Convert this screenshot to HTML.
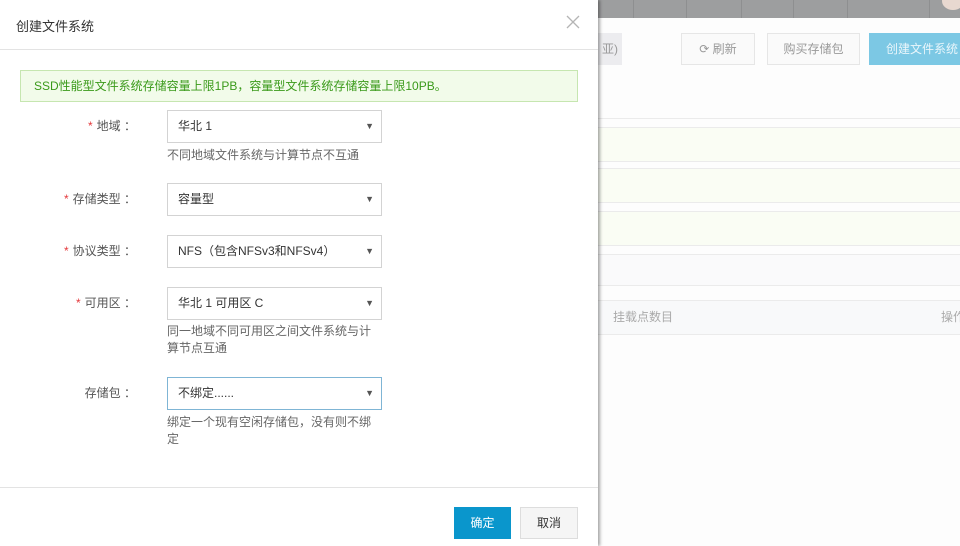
<!DOCTYPE html>
<html><head><meta charset="utf-8"><style>
*{box-sizing:border-box;margin:0;padding:0}
body{width:960px;height:546px;overflow:hidden;position:relative;background:#fdfdfd;font-family:"Liberation Sans","Noto Sans CJK SC",sans-serif;font-size:12px;color:#333}
.abs{position:absolute}
.top{left:598px;top:0;width:362px;height:18px;background:#9d9e9f}
.top i{position:absolute;top:0;width:1px;height:18px;background:#8e8f90}
.btn{position:absolute;top:33px;height:32px;line-height:30px;text-align:center;border:1px solid #e6e6e6;background:#fafafa;color:#999;white-space:nowrap;overflow:hidden}
.row{position:absolute;left:598px;width:362px;border-top:1px solid #ebebeb;border-bottom:1px solid #ebebeb;white-space:nowrap}
.modal{left:0;top:0;width:598px;height:546px;background:#fff;box-shadow:2px 0 3px rgba(0,0,0,.35)}
.title{left:16px;top:16px;font-size:13px;color:#333}
.hr{left:0;width:598px;height:1px;background:#e3e3e3}
.alert{left:20px;top:70px;width:558px;height:32px;background:#f2fbea;border:1px solid #c6e6b0;color:#3a9a1a;line-height:30px;padding-left:13px}
.lbl{position:absolute;width:136px;text-align:right;color:#555;line-height:32px;white-space:nowrap}
.lbl b{color:#e4393c;font-weight:normal;margin-right:4px}
.sel{position:absolute;left:167px;width:215px;height:33px;border:1px solid #d3d3d3;line-height:31px;padding-left:10px;color:#333}
.sel:after{content:"▼";position:absolute;right:7px;top:0;font-size:9px;color:#555}
.help{position:absolute;left:167px;width:215px;color:#666;line-height:17px}
</style></head><body>
<div class="abs top"><i style="left:35px"></i><i style="left:88px"></i><i style="left:143px"></i><i style="left:195px"></i><i style="left:249px"></i><i style="left:331px"></i></div>
<div class="abs" style="left:942px;top:-8px;width:22px;height:18px;border-radius:50%;background:#e8d8d0"></div>
<div class="btn" style="left:598px;width:24px;background:#ececef;border-color:#ececef">亚)</div>
<div class="btn" style="left:681px;width:74px">⟳ 刷新</div>
<div class="btn" style="left:767px;width:93px">购买存储包</div>
<div class="btn" style="left:869px;width:95px;background:#7cc8e4;border-color:#7cc8e4;color:#eaf6fb;text-align:left;padding-left:16px">创建文件系统</div>
<div class="row" style="top:118px;height:1px;border-bottom:none"></div>
<div class="row" style="top:127px;height:35px;background:#fafdf4"></div>
<div class="row" style="top:168px;height:35px;background:#fafdf4"></div>
<div class="row" style="top:211px;height:35px;background:#fafdf4"></div>
<div class="row" style="top:254px;height:32px;background:#fafafb"></div>
<div class="row" style="top:300px;height:35px;background:#f8f9fa;color:#aaa;line-height:33px"><span style="position:absolute;left:15px">挂载点数目</span><span style="position:absolute;left:343px">操作</span></div>

<div class="abs modal">
<div class="abs title">创建文件系统</div>
<svg class="abs" style="left:566px;top:15px" width="14" height="14" viewBox="0 0 14 14"><path d="M1 1L13 13M13 1L1 13" stroke="#b5b5b5" stroke-width="1.3" fill="none"/></svg>
<div class="abs hr" style="top:49px"></div>
<div class="abs alert">SSD性能型文件系统存储容量上限1PB，容量型文件系统存储容量上限10PB。</div>

<div class="lbl" style="top:110px"><b>*</b>地域 ：</div>
<div class="sel" style="top:110px">华北 1</div>
<div class="help" style="top:147px">不同地域文件系统与计算节点不互通</div>

<div class="lbl" style="top:183px"><b>*</b>存储类型 ：</div>
<div class="sel" style="top:183px">容量型</div>

<div class="lbl" style="top:235px"><b>*</b>协议类型 ：</div>
<div class="sel" style="top:235px">NFS（包含NFSv3和NFSv4）</div>

<div class="lbl" style="top:287px"><b>*</b>可用区 ：</div>
<div class="sel" style="top:287px">华北 1 可用区 C</div>
<div class="help" style="top:323px">同一地域不同可用区之间文件系统与计算节点互通</div>

<div class="lbl" style="top:377px">存储包 ：</div>
<div class="sel" style="top:377px;border-color:#7fb5d5">不绑定......</div>
<div class="help" style="top:414px">绑定一个现有空闲存储包，没有则不绑定</div>

<div class="abs hr" style="top:487px"></div>
<div class="abs" style="left:454px;top:507px;width:57px;height:32px;background:#0a96cc;color:#fff;text-align:center;line-height:32px">确定</div>
<div class="abs" style="left:520px;top:507px;width:58px;height:32px;background:#f5f5f5;border:1px solid #ddd;color:#333;text-align:center;line-height:30px">取消</div>
</div>
</body></html>
